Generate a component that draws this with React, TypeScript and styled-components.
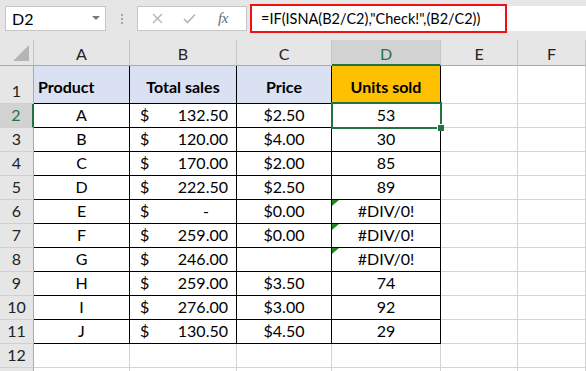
import styled, { createGlobalStyle, css } from 'styled-components';

const GlobalStyle = createGlobalStyle`
  html, body {
    margin: 0;
    padding: 0;
    background: #ffffff;
    overflow: hidden;
  }
  body {
    font-family: Lato, "Open Sans", "Liberation Sans", sans-serif;
    color: #000;
  }
`;

const GREEN = '#217346';
const GRID = '#d4d4d4';
const HEAD_BG = '#e6e6e6';

const Page = styled.div`
  width: 586px;
  height: 371px;
  overflow: hidden;
  background: ${HEAD_BG};
`;

const FormulaBar = styled.div`
  height: 40px;
  display: flex;
  align-items: flex-start;
  padding: 6px 0 0 5px;
  box-sizing: border-box;
`;

const NameBox = styled.div`
  width: 101px;
  height: 25px;
  box-sizing: border-box;
  background: #fff;
  border: 1px solid #c6c6c6;
  display: flex;
  align-items: center;
  justify-content: space-between;
  padding: 0 5px 0 6px;
  font-size: 16px;
`;

const Caret = styled.span`
  width: 0;
  height: 0;
  border-left: 4px solid transparent;
  border-right: 4px solid transparent;
  border-top: 4px solid #7a7a7a;
  margin-bottom: 2px;
`;

const Grip = styled.div`
  width: 31px;
  height: 25px;
  display: flex;
  flex-direction: column;
  align-items: center;
  justify-content: center;
  gap: 2px;

  span {
    width: 2px;
    height: 2px;
    background: #a8a8a8;
  }
`;

const ButtonBox = styled.div`
  width: 110px;
  height: 25px;
  box-sizing: border-box;
  background: #fff;
  border: 1px solid #c6c6c6;
  display: flex;
  align-items: center;
  padding-left: 14px;
  gap: 20px;
`;

const FxLabel = styled.span`
  font-family: "Liberation Serif", serif;
  font-style: italic;
  font-size: 15px;
  color: #6b6b6b;
  margin-left: 2px;
  letter-spacing: -0.5px;
`;

const FormulaInput = styled.div`
  flex: 1;
  height: 25px;
  margin-left: 3px;
  background: #fff;
  position: relative;
  display: flex;
  align-items: center;
  padding-left: 11px;
  font-size: 14.5px;
  white-space: nowrap;
`;

const Highlight = styled.span`
  position: absolute;
  left: 0;
  top: -2px;
  width: 257px;
  height: 29px;
  box-sizing: border-box;
  border: 2px solid #ee1111;
`;

const Sheet = styled.div`
  display: grid;
  grid-template-columns: 34px 96px 107px 95px 109px 77px 1fr;
  grid-template-rows: 26px 38px repeat(12, 24px);
`;

const Corner = styled.div`
  background: ${HEAD_BG};
  border-right: 1px solid #c6c6c6;
  border-bottom: 1px solid #ababab;
  display: flex;
  align-items: flex-end;
  justify-content: flex-end;
  padding: 0 4px 4px 0;
  box-sizing: border-box;

  span {
    width: 0;
    height: 0;
    border-left: 16px solid transparent;
    border-bottom: 16px solid #b4b4b4;
  }
`;

const ColHeader = styled.div<{ $active?: boolean }>`
  background: ${(p) => (p.$active ? '#d2d2d2' : HEAD_BG)};
  color: ${(p) => (p.$active ? GREEN : '#222')};
  border-right: 1px solid #c6c6c6;
  border-bottom: ${(p) => (p.$active ? `2px solid ${GREEN}` : '1px solid #ababab')};
  display: flex;
  align-items: center;
  justify-content: center;
  font-size: 16px;
  padding-top: 2px;
  box-sizing: border-box;
`;

const RowHeader = styled.div<{ $active?: boolean }>`
  background: ${(p) => (p.$active ? '#d2d2d2' : HEAD_BG)};
  color: ${(p) => (p.$active ? GREEN : '#222')};
  border-right: ${(p) => (p.$active ? `2px solid ${GREEN}` : '1px solid #ababab')};
  border-bottom: 1px solid #d0d0d0;
  display: flex;
  align-items: flex-end;
  justify-content: center;
  padding-bottom: 3px;
  font-size: 16px;
  box-sizing: border-box;
`;

const Cell = styled.div<{ $bg?: string; $table?: boolean; $align?: string; $bold?: boolean }>`
  position: relative;
  background: ${(p) => p.$bg || '#fff'};
  border-right: 1px solid ${(p) => (p.$table ? '#000' : GRID)};
  border-bottom: 1px solid ${(p) => (p.$table ? '#000' : GRID)};
  display: flex;
  align-items: flex-end;
  justify-content: ${(p) => p.$align || 'center'};
  padding: 0 4px 3px;
  box-sizing: border-box;
  font-size: 16px;
  white-space: nowrap;
  ${(p) =>
    p.$bold &&
    css`
      font-weight: 700;
      align-items: center;
      padding-bottom: 0;
      padding-top: 4px;
    `}
`;

const Accounting = styled(Cell)`
  justify-content: space-between;
  padding: 0 8px 3px 10px;
`;

const Dash = styled.span`
  margin-right: 19px;
`;

const ErrorMark = styled.span`
  position: absolute;
  top: 0;
  left: 0;
  width: 0;
  height: 0;
  border-top: 6px solid #1e8a1e;
  border-right: 7px solid transparent;
`;

const Selection = styled.span`
  position: absolute;
  z-index: 2;
  top: -2px;
  left: -1px;
  right: -2px;
  bottom: -2px;
  border: 2px solid ${GREEN};
  pointer-events: none;

  &::after {
    content: '';
    position: absolute;
    right: -4px;
    bottom: -4px;
    width: 6px;
    height: 6px;
    background: ${GREEN};
    border: 1px solid #fff;
    border-right: none;
    border-bottom: none;
  }
`;

const products = [
  { p: 'A', s: '132.50', price: '$2.50', u: '53' },
  { p: 'B', s: '120.00', price: '$4.00', u: '30' },
  { p: 'C', s: '170.00', price: '$2.00', u: '85' },
  { p: 'D', s: '222.50', price: '$2.50', u: '89' },
  { p: 'E', s: '-', price: '$0.00', u: '#DIV/0!', err: true },
  { p: 'F', s: '259.00', price: '$0.00', u: '#DIV/0!', err: true },
  { p: 'G', s: '246.00', price: '', u: '#DIV/0!', err: true },
  { p: 'H', s: '259.00', price: '$3.50', u: '74' },
  { p: 'I', s: '276.00', price: '$3.00', u: '92' },
  { p: 'J', s: '130.50', price: '$4.50', u: '29' },
];

const letters = ['A', 'B', 'C', 'D', 'E', 'F'];

function XIcon() {
  return (
    <svg width="11" height="11" viewBox="0 0 11 11">
      <path d="M1 1 L10 10 M10 1 L1 10" stroke="#b5b5b5" strokeWidth="1.4" fill="none" />
    </svg>
  );
}

function CheckIcon() {
  return (
    <svg width="13" height="11" viewBox="0 0 13 11">
      <path d="M1 6 L4.5 9.5 L12 1.5" stroke="#b5b5b5" strokeWidth="1.6" fill="none" />
    </svg>
  );
}

function EmptyCells() {
  return (
    <>
      <Cell />
      <Cell />
    </>
  );
}

export default function App() {
  return (
    <Page>
      <GlobalStyle />
      <FormulaBar>
        <NameBox>
          D2
          <Caret />
        </NameBox>
        <Grip>
          <span />
          <span />
          <span />
        </Grip>
        <ButtonBox>
          <XIcon />
          <CheckIcon />
          <FxLabel>fx</FxLabel>
        </ButtonBox>
        <FormulaInput>
          =IF(ISNA(B2/C2),"Check!",(B2/C2))
          <Highlight />
        </FormulaInput>
      </FormulaBar>

      <Sheet>
        <Corner>
          <span />
        </Corner>
        {letters.map((l) => (
          <ColHeader key={l} $active={l === 'D'}>
            {l}
          </ColHeader>
        ))}

        <RowHeader>1</RowHeader>
        <Cell $bg="#d9e1f2" $table $bold $align="flex-start">
          Product
        </Cell>
        <Cell $bg="#d9e1f2" $table $bold>
          Total sales
        </Cell>
        <Cell $bg="#d9e1f2" $table $bold>
          Price
        </Cell>
        <Cell $bg="#ffc000" $table $bold>
          Units sold
        </Cell>
        <EmptyCells />

        {products.map((r, i) => (
          <div key={r.p} style={{ display: 'contents' }}>
            <RowHeader $active={i === 0}>{i + 2}</RowHeader>
            <Cell $table>{r.p}</Cell>
            <Accounting $table>
              <span>$</span>
              {r.s === '-' ? <Dash>-</Dash> : <span>{r.s}</span>}
            </Accounting>
            <Cell $table>{r.price}</Cell>
            <Cell $table>
              {r.err && <ErrorMark />}
              {r.u}
              {i === 0 && <Selection />}
            </Cell>
            <EmptyCells />
          </div>
        ))}

        {[12, 13].map((n) => (
          <div key={n} style={{ display: 'contents' }}>
            <RowHeader>{n === 12 ? n : ''}</RowHeader>
            <Cell />
            <Cell />
            <Cell />
            <Cell />
            <EmptyCells />
          </div>
        ))}
      </Sheet>
    </Page>
  );
}
